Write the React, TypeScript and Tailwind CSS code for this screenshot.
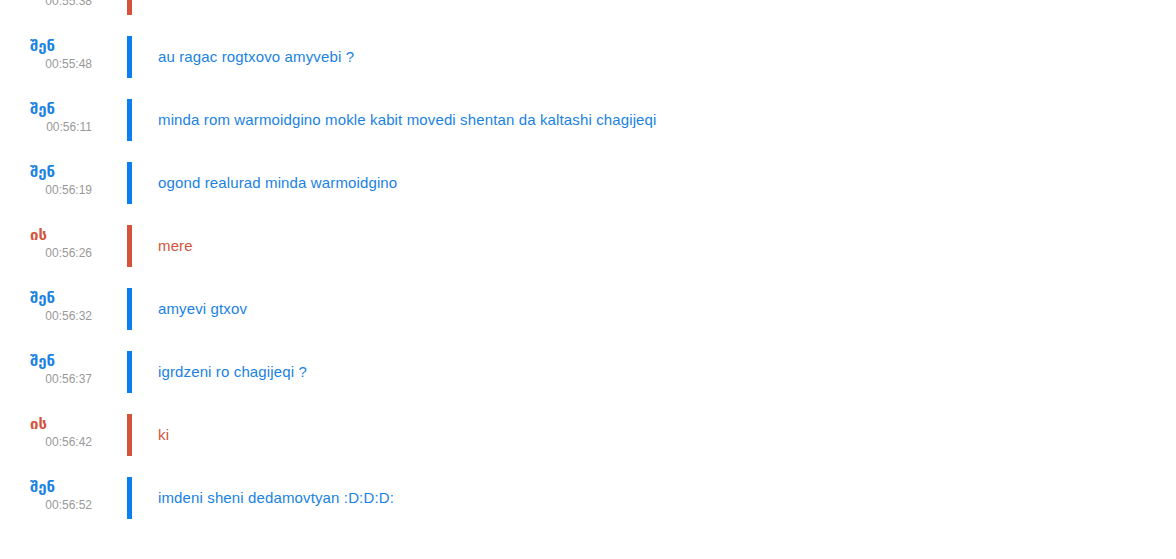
import clsx from "clsx";

interface Msg {
  me: boolean;
  time: string;
  text: string;
}

const messages: Msg[] = [
  { me: false, time: "00:55:38", text: "" },
  { me: true, time: "00:55:48", text: "au ragac rogtxovo amyvebi ?" },
  { me: true, time: "00:56:11", text: "minda rom warmoidgino mokle kabit movedi shentan da kaltashi chagijeqi" },
  { me: true, time: "00:56:19", text: "ogond realurad minda warmoidgino" },
  { me: false, time: "00:56:26", text: "mere" },
  { me: true, time: "00:56:32", text: "amyevi gtxov" },
  { me: true, time: "00:56:37", text: "igrdzeni ro chagijeqi ?" },
  { me: false, time: "00:56:42", text: "ki" },
  { me: true, time: "00:56:52", text: "imdeni sheni dedamovtyan :D:D:D:" },
];

export default function App() {
  return (
    <div className="h-[559px] w-full overflow-hidden bg-white font-['Liberation_Sans','DejaVu_Sans',sans-serif]">
      <div className="-mt-[27px] flex flex-col">
        {messages.map((m, i) => (
          <div key={i} className="mb-[21px] flex h-[42px] items-stretch">
            {/* who + when */}
            <div className="flex w-[92px] shrink-0 flex-col pl-[30px] pt-[2px]">
              <span
                className={clsx(
                  "text-[15px] leading-[17px] font-bold font-['DejaVu_Sans',sans-serif]",
                  m.me ? "text-[#1a82e2]" : "text-[#d4533a]"
                )}
              >
                {m.me ? "შენ" : "ის"}
              </span>
              <span className="mt-[2px] text-right text-[12px] leading-[15px] text-[#999999]">{m.time}</span>
            </div>
            {/* bar */}
            <div
              className={clsx(
                "ml-[35px] w-[5px] shrink-0",
                m.me ? "bg-[#0b7ef0]" : "bg-[#d4533a]"
              )}
            />
            {/* text */}
            <div
              className={clsx(
                "flex items-center pb-[2px] pl-[26px] text-[15px] leading-[17px] tracking-[0.13px]",
                m.me ? "text-[#1a82e2]" : "text-[#d4533a]"
              )}
            >
              {m.text}
            </div>
          </div>
        ))}
      </div>
    </div>
  );
}
